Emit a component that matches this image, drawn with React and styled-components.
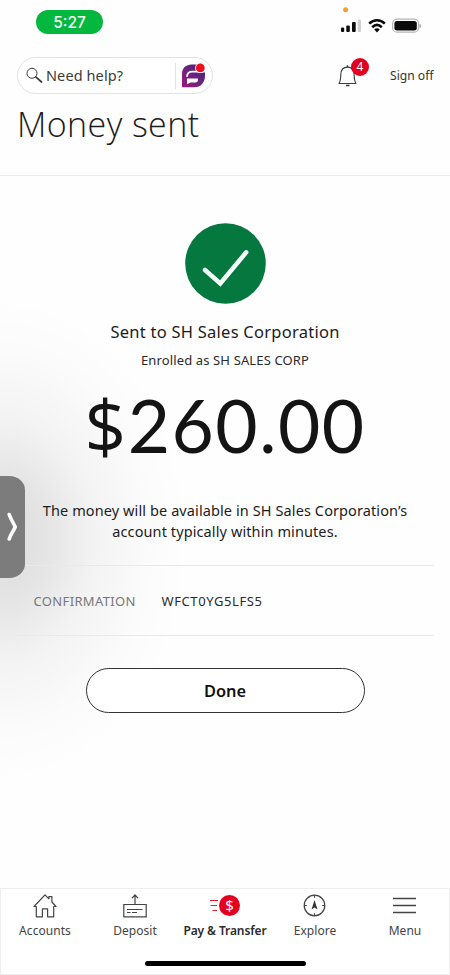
import React from 'react'
import styled, { createGlobalStyle } from 'styled-components';


const GlobalStyle = createGlobalStyle`
  * {
    box-sizing: border-box;
  }
  body {
    margin: 0;
    background: #fefefe;
    font-family: 'Noto Sans', 'Open Sans', sans-serif;
    color: #1c1c1c;
  }
  svg {
    display: block;
    flex-shrink: 0;
  }
  h1, p {
    margin: 0;
    font-weight: 400;
    white-space: nowrap;
  }
  button {
    font-family: inherit;
    margin: 0;
    padding: 0;
    border: none;
    background: none;
    color: inherit;
  }
`;

const tabs = [
  { name: 'Accounts', icon: <HouseIcon /> },
  { name: 'Deposit', icon: <DepositIcon /> },
  { name: 'Pay & Transfer', icon: <TransferIcon />, active: true },
  { name: 'Explore', icon: <CompassIcon /> },
  { name: 'Menu', icon: <MenuIcon /> },
]

function App() {
  return (
    <Screen>
      <GlobalStyle />
      <StatusBar>
        <TimePill>5:27</TimePill>
        <StatusIcons />
      </StatusBar>

      <TopBar>
        <SearchPill>
          <SearchIcon />
          <SearchText>Need help?</SearchText>
          <SearchDivider />
          <AssistantIcon />
        </SearchPill>
        <BellButton>
          <BellIcon />
          <Badge>4</Badge>
        </BellButton>
        <SignOff>Sign off</SignOff>
      </TopBar>

      <TitleArea>
        <Title>Money sent</Title>
      </TitleArea>

      <Content>
        <CheckIcon />
        <Recipient>Sent to SH Sales Corporation</Recipient>
        <Enrolled>Enrolled as SH SALES CORP</Enrolled>
        <Amount><Currency>$</Currency>260.00</Amount>
        <Message>
          The money will be available in SH Sales Corporation’s<br />
          account typically within minutes.
        </Message>
        <Confirmation>
          <ConfirmLabel>CONFIRMATION</ConfirmLabel>
          <ConfirmCode>WFCT0YG5LFS5</ConfirmCode>
        </Confirmation>
        <DoneButton>Done</DoneButton>
      </Content>

      <TabBar>
        <Tabs>
          {tabs.map(tab => (
            <Tab key={tab.name} $active={tab.active}>
              {tab.icon}
              <span>{tab.name}</span>
            </Tab>
          ))}
        </Tabs>
        <HomeIndicator />
      </TabBar>

      <PipHandle>
        <svg width="12" height="30" viewBox="0 0 12 30" fill="none" stroke="#fff" strokeWidth="3.6" strokeLinecap="round" strokeLinejoin="round">
          <path d="M2.2 2.5C3.6 7 6.8 11.5 8.2 15C6.8 18.5 3.6 22.5 2.2 27" />
        </svg>
      </PipHandle>
    </Screen>
  )
}

function StatusIcons() {
  return (
    <svg width="84" height="32" viewBox="0 0 84 32">
      <circle cx="8.6" cy="4.7" r="2.5" fill="#f0a22e" />
      <g fill="#0b0b0b">
        <rect x="4" y="22.5" width="3.2" height="4.5" rx="1" />
        <rect x="9.3" y="20.5" width="3.5" height="6.5" rx="1" />
        <rect x="15" y="17" width="3.7" height="10" rx="1" />
      </g>
      <rect x="20.7" y="14.5" width="3.3" height="12.5" rx="1" fill="#d0d0d0" />
      <g fill="none" stroke="#0b0b0b" strokeWidth="2.6">
        <path d="M32.2 18.6C36.8 14.1 43.2 14.1 47.8 18.6" />
        <path d="M35.2 22.2C38.2 19.3 41.8 19.3 44.8 22.2" />
      </g>
      <path d="M37.2 24.4C38.8 23 41.2 23 42.8 24.4L40 27.4Z" fill="#0b0b0b" />
      <rect x="55.6" y="14.2" width="26" height="13" rx="4.5" fill="#fff" stroke="#b4b4b4" strokeWidth="1.2" />
      <rect x="57.4" y="16" width="22.4" height="9.6" rx="2.5" fill="#0b0b0b" />
      <path d="M83.2 19.3V22.7" stroke="#a9a9a9" strokeWidth="1.4" />
    </svg>
  )
}

function SearchIcon() {
  return (
    <svg width="18" height="18" viewBox="0 0 18 18" fill="none" stroke="#3b3b3b">
      <circle cx="6" cy="6.3" r="5" strokeWidth="1" />
      <path d="M9.7 9.8L15.6 15" strokeWidth="1.7" strokeLinecap="round" />
    </svg>
  )
}

function AssistantIcon() {
  return (
    <svg width="24" height="26" viewBox="0 0 24 26">
      <defs>
        <linearGradient id="assistant" x1="0" y1="1" x2="1" y2="0">
          <stop offset="0" stopColor="#a01878" />
          <stop offset="0.5" stopColor="#6d2380" />
          <stop offset="1" stopColor="#3f2379" />
        </linearGradient>
      </defs>
      <path d="M9.5 1.5H16V9.5H23V12.5C23 19.5 19 24.3 12 24.3H0V11C0 5 4 1.5 9.5 1.5Z" fill="url(#assistant)" />
      <path d="M5 13.8C5 10.2 7 8.6 10.5 8.6H17.500" fill="none" stroke="#fff" strokeWidth="1.8" />
      <path d="M5 15.4H16V17C16 18.700 15 19.400 13.300 19.400H8.500L5 21.200Z" fill="#fff" />
      <circle cx="18.3" cy="4.9" r="5.2" fill="#fff" />
      <circle cx="18.3" cy="4.9" r="4.4" fill="#ee0f20" />
    </svg>
  )
}

function BellIcon() {
  return (
    <svg width="20" height="24" viewBox="0 0 20 24" fill="none" stroke="#3b3b3b" strokeWidth="1.1">
      <path d="M1 19.500C2.600 17 2.700 14 2.800 10.500C2.900 6 5.500 3.100 9.500 3.100C13.500 3.100 16 6 16.100 10.500C16.200 14 16.400 17 18 19.500Z" strokeLinejoin="round" />
      <path d="M9.500 3.100V1.300M8 21.600H11.500" strokeWidth="1.500" />
    </svg>
  )
}

function CheckIcon() {
  return (
    <svg width="81" height="81" viewBox="0 0 81 81">
      <circle cx="40.5" cy="40.5" r="40.3" fill="#04783f" />
      <path d="M20 47L35.300 60.500L61.200 29.300" fill="none" stroke="#f4fff9" strokeWidth="4.500" strokeLinecap="round" />
    </svg>
  )
}

function HouseIcon() {
  return (
    <svg width="24" height="24" viewBox="0 0 24 24" fill="none" stroke="#444" strokeWidth="1.2">
      <path d="M3.3 12.5V22.8H9.4V14.8H14.6V22.8H20.7V12.5H23L18.9 8V2.7H15.9V4.8L12 .9L1 12.5Z" strokeLinejoin="round" />
    </svg>
  )
}

function DepositIcon() {
  return (
    <svg width="24" height="24" viewBox="0 0 24 24" fill="none" stroke="#444" strokeWidth="1.2">
      <path d="M.8 10.5H23.2V22.8H.8Z" />
      <path d="M12 10.5V1M9 4.2L12 1L15 4.2" />
      <path d="M4 15.5H19.5M4 18.5H7.5M9 18.5H14" strokeWidth="1" />
    </svg>
  )
}

function TransferIcon() {
  return (
    <TransferWrap>
      <svg width="8" height="24" viewBox="0 0 8 24" stroke="#e41c2c" strokeWidth="1.2">
        <path d="M0 6.5H8M.5 11.5H7M2.5 16.5H7" />
      </svg>
      <Coin>$</Coin>
    </TransferWrap>
  )
}

function CompassIcon() {
  return (
    <svg width="24" height="24" viewBox="0 0 24 24" fill="none" stroke="#444" strokeWidth="1.2">
      <circle cx="11.5" cy="11.5" r="10.3" />
      <path d="M11.5 1.200V3.800M11.500 19.200V21.800M1.200 11.500H3.800M19.200 11.500H21.800" />
      <path d="M11.500 6L14.500 15.500L11.500 13.500L8.500 15.500Z" fill="#333" stroke="none" />
    </svg>
  )
}

function MenuIcon() {
  return (
    <svg width="24" height="24" viewBox="0 0 24 24" stroke="#444" strokeWidth="1.3">
      <path d="M0 4.5H23M0 11.5H23M0 18.5H23" />
    </svg>
  )
}

const Screen = styled.div`
  position: relative;
  width: 450px;
  height: 975px;
  display: flex;
  flex-direction: column;
  overflow: hidden;
  background:
    radial-gradient(ellipse 190px 245px at 0 540px, rgba(0,0,0,.135) 0%, rgba(0,0,0,.1) 25%, rgba(0,0,0,.045) 50%, rgba(0,0,0,.012) 78%, rgba(0,0,0,0) 100%),
    #fefefe;
`;

const StatusBar = styled.div`
  height: 57px;
  display: flex;
  justify-content: space-between;
  align-items: flex-start;
  padding: 10px 29px 0 36px;
  > svg {
    margin-top: -5px;
  }
`;

const TimePill = styled.div`
  width: 67px;
  height: 24px;
  border-radius: 12px;
  background: #04b83f;
  color: #f2fff5;
  font-family: Inter, sans-serif;
  font-size: 15.5px;
  font-weight: 500;
  line-height: 25px;
  text-align: center;
`;

const TopBar = styled.div`
  height: 37px;
  display: flex;
  align-items: center;
  padding-left: 17px;
`;

const SearchPill = styled.div`
  width: 196px;
  height: 37px;
  display: flex;
  align-items: center;
  padding-left: 8px;
  border: 1px solid #e3e3e3;
  border-radius: 19px;
  background: #fff;
`;

const SearchText = styled.span`
  width: 129px;
  padding: 0 0 1px 2px;
  font-size: 14.5px;
  letter-spacing: 0.1px;
  color: #3b3b3b;
  line-height: 20px;
`;

const SearchDivider = styled.span`
  width: 1px;
  height: 26px;
  margin-right: 6px;
  margin-left: 2px;
  background: #e3e3e3;
`;

const BellButton = styled.button`
  position: relative;
  margin-left: 125px;
`;

const Badge = styled.span`
  position: absolute;
  top: -6px;
  left: 13px;
  width: 18px;
  height: 18px;
  border-radius: 50%;
  background: #e3001f;
  color: #fff;
  font-size: 12px;
  line-height: 18px;
  text-align: center;
`;

const SignOff = styled.button`
  margin-left: 32px;
  font-size: 12.1px;
  color: #333;
  line-height: 20px;
  white-space: nowrap;
`;

const TitleArea = styled.header`
  height: 82px;
  padding: 10px 17px 0;
  border-bottom: 1px solid #ececec;
`;

const Title = styled.h1`
  font-family: 'Open Sans', 'Noto Sans', sans-serif;
  font-size: 34px;
  font-weight: 300;
  letter-spacing: 0.4px;
  line-height: 40px;
`;

const Content = styled.main`
  flex: 1;
  display: flex;
  flex-direction: column;
  align-items: center;
  padding-top: 47px;
`;

const Recipient = styled.p`
  margin-top: 17px;
  font-size: 16.5px;
  letter-spacing: 0.25px;
  line-height: 22px;
`;

const Enrolled = styled.p`
  margin-top: 7px;
  font-size: 13px;
  letter-spacing: 0.13px;
  line-height: 20px;
  color: #2b2b2b;
`;

const Amount = styled.p`
  margin-top: 15px;
  font-family: Lato, 'Noto Sans', sans-serif;
  font-size: 73px;
  letter-spacing: 1.5px;
  line-height: 80px;
  color: #141414;
`;

const Currency = styled.span`
  font-family: 'Open Sans', 'Noto Sans', sans-serif;
  line-height: 1;
`;

const Message = styled.p`
  margin-top: 35px;
  font-size: 14.5px;
  letter-spacing: 0.1px;
  line-height: 20.5px;
  text-align: center;
`;

const Confirmation = styled.section`
  width: 417px;
  height: 71px;
  margin-top: 24px;
  display: flex;
  align-items: center;
  padding-left: 17px;
  border-top: 1px solid #e9e9e9;
  border-bottom: 1px solid #e9e9e9;
  font-size: 13px;
`;

const ConfirmLabel = styled.span`
  width: 128px;
  color: #777;
  letter-spacing: 0.35px;
`;

const ConfirmCode = styled.span`
  color: #2b2b2b;
  letter-spacing: 0.6px;
`;

const DoneButton = styled.button`
  width: 279px;
  height: 45px;
  margin-top: 32px;
  border: 1.5px solid #333;
  border-radius: 23px;
  background: #fff;
  color: #111;
  font-size: 16.4px;
  font-weight: 600;
`;

const TabBar = styled.nav`
  height: 87px;
  display: flex;
  flex-direction: column;
  align-items: center;
  border: 1px solid #eee;
  background: #fff;
`;

const Tabs = styled.div`
  width: 450px;
  height: 72px;
  display: grid;
  grid-template-columns: repeat(5, 90px);
  padding-top: 5px;
`;

const Tab = styled.button`
  display: flex;
  flex-direction: column;
  align-items: center;
  gap: 4px;
  color: ${props => props.$active ? '#2b2b2b' : '#444'};
  font-size: 12px;
  font-weight: ${props => props.$active ? 600 : 400};
  letter-spacing: ${props => props.$active ? '-0.1px' : '0.05px'};
  line-height: 18px;
  white-space: nowrap;
`;

const TransferWrap = styled.div`
  display: flex;
  align-items: center;
  height: 24px;
  gap: 1px;
  padding-bottom: 1px;
`;

const Coin = styled.span`
  width: 21px;
  height: 21px;
  border-radius: 50%;
  background: #e3001f;
  color: #fff;
  font-size: 15px;
  font-weight: 400;
  line-height: 21px;
  text-align: center;
`;

const HomeIndicator = styled.div`
  width: 161px;
  height: 5px;
  border-radius: 3px;
  background: #000;
`;

/* picture-in-picture tab docked to the screen edge */
const PipHandle = styled.div`
  position: absolute;
  top: 476px;
  left: 0;
  width: 25px;
  height: 102px;
  display: flex;
  align-items: center;
  padding-left: 7px;
  border-radius: 0 16px 16px 0 / 0 14px 14px 0;
  background: #7c7c7c;
`;

export default App;
